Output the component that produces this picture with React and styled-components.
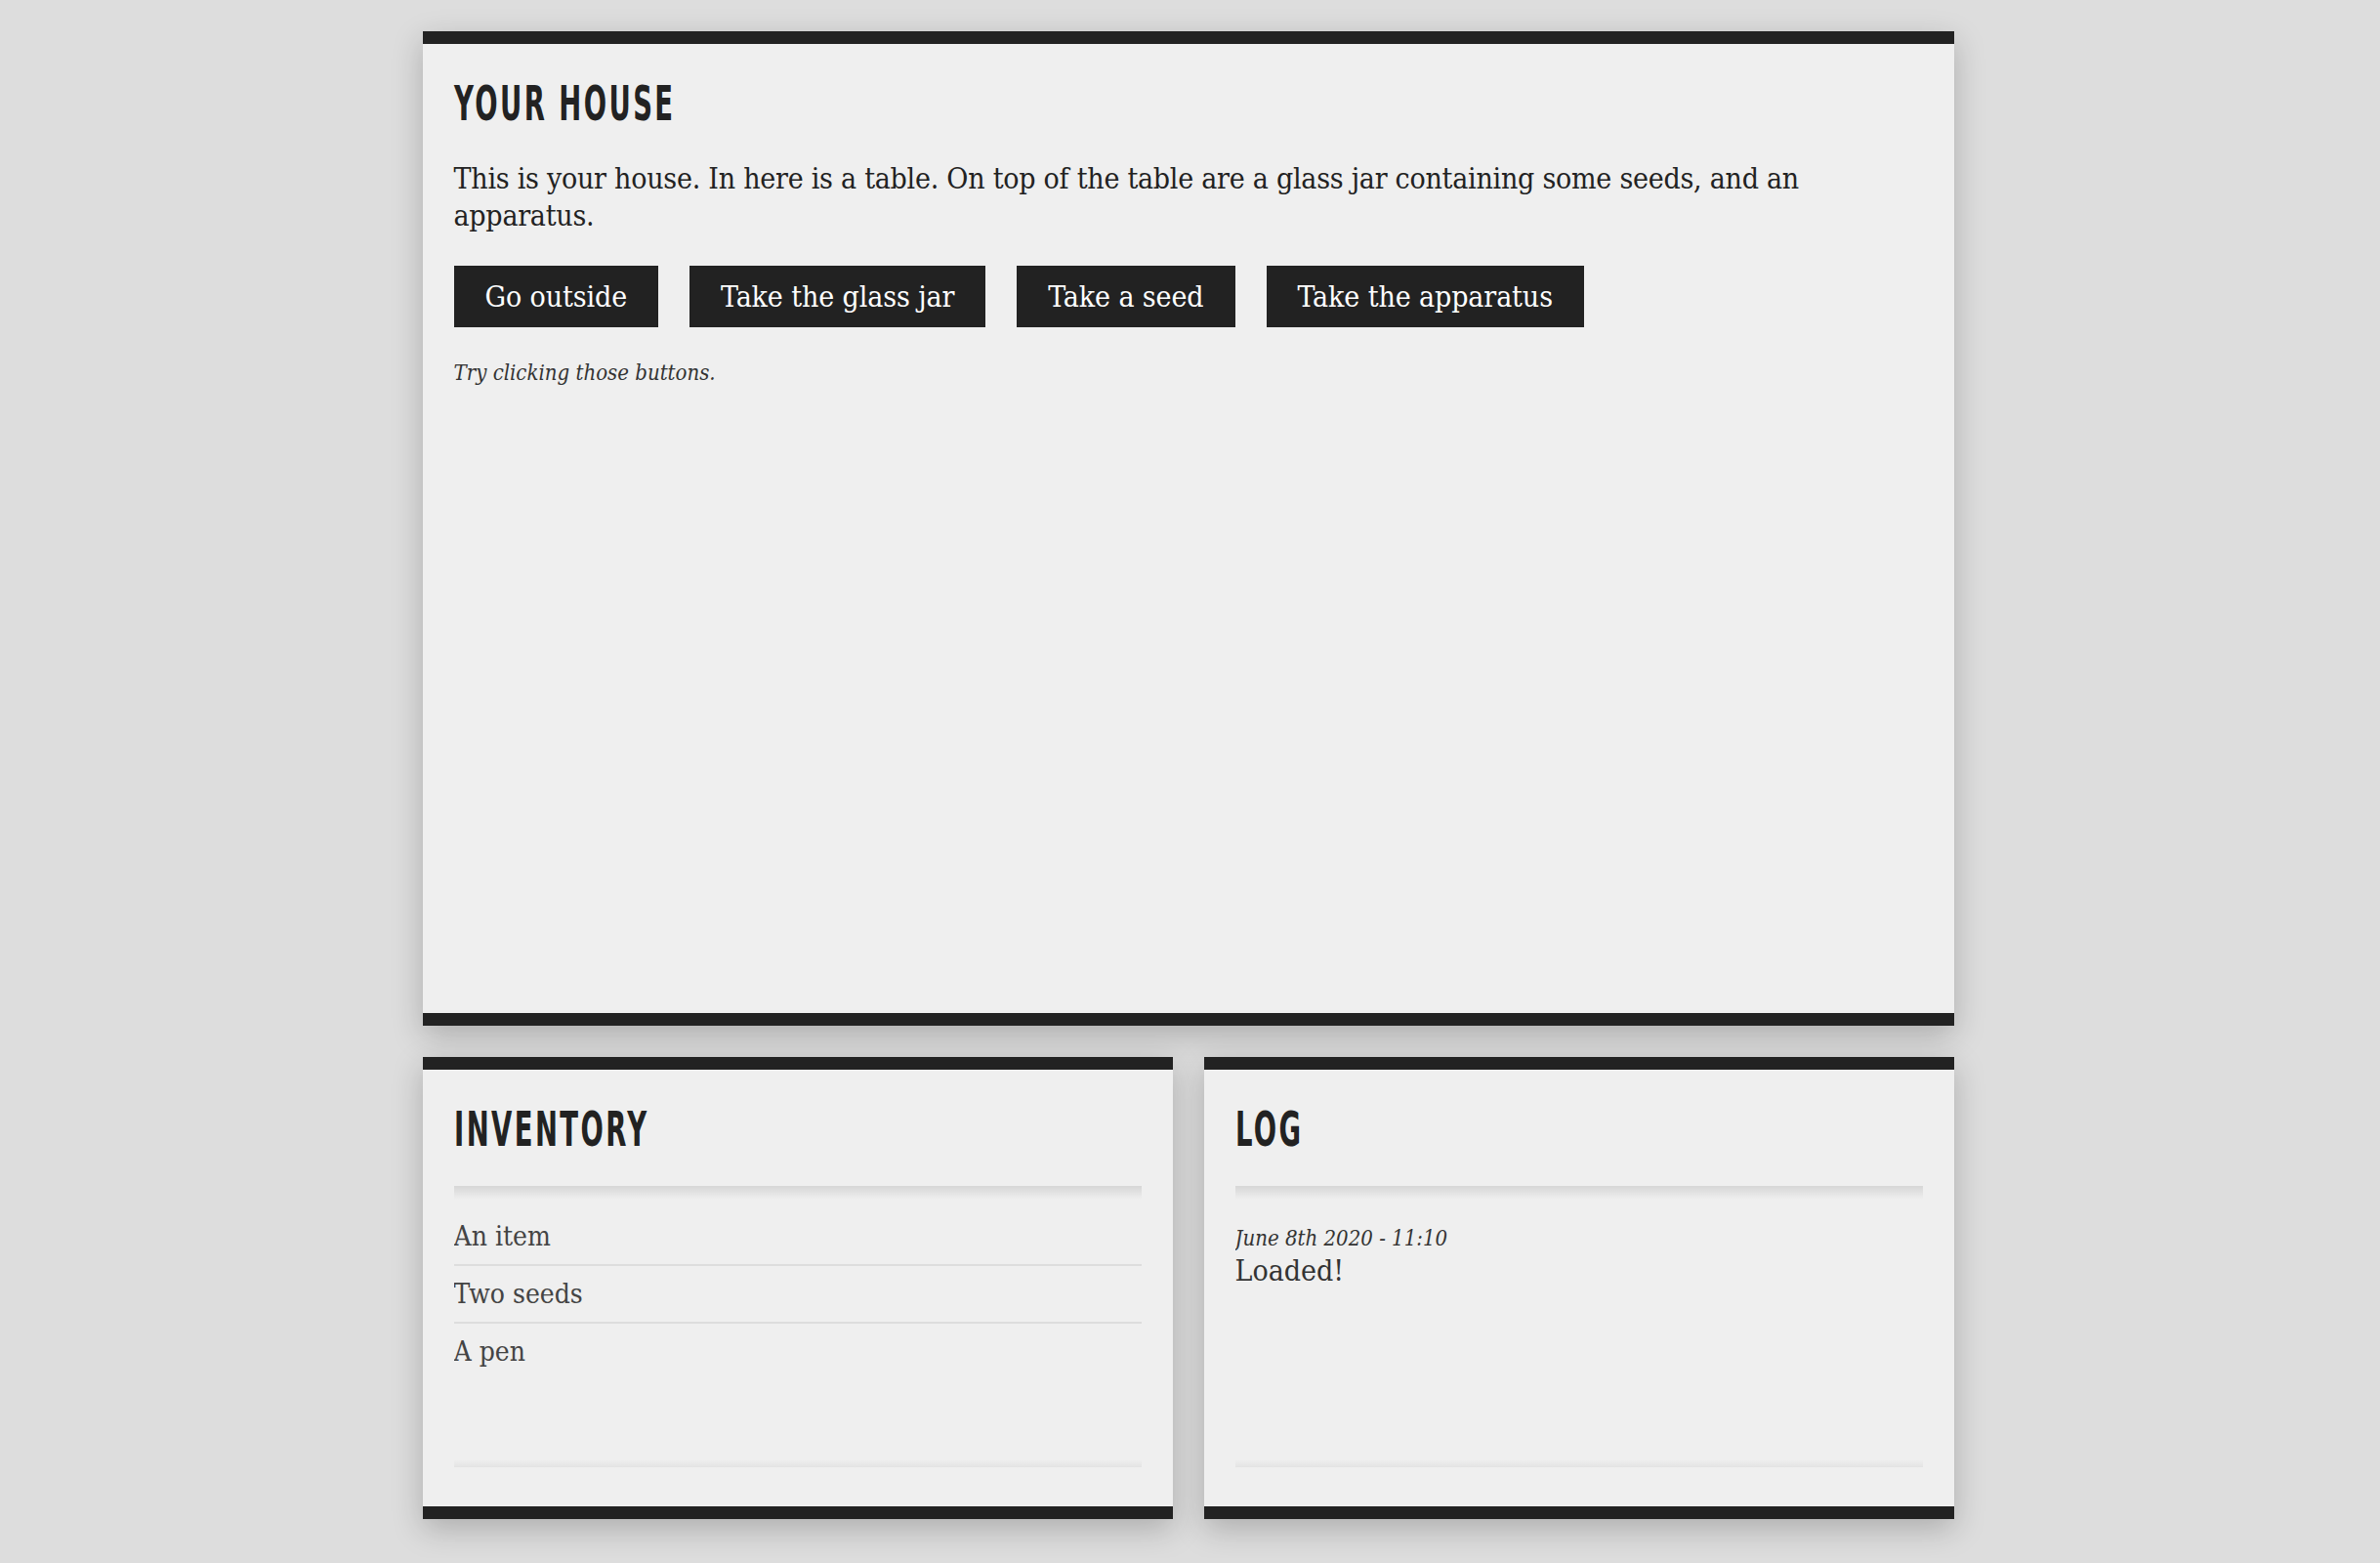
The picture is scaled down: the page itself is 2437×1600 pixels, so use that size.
import React from "react";
import styled, { createGlobalStyle } from "styled-components";

const GlobalStyle = createGlobalStyle`
  html, body {
    margin: 0;
    padding: 0;
    background: #dddddd;
  }
  body {
    font-family: "DejaVu Serif", serif;
    font-stretch: condensed;
    color: #222;
  }
`;

const Page = styled.div`
  width: 1568px;
  margin-left: calc(50% - 786px);
  padding: 32px 0 40px;
  display: flex;
  flex-direction: column;
  gap: 32px;
`;

const Row = styled.div`
  display: grid;
  grid-template-columns: 1fr 1fr;
  gap: 32px;
`;

const Panel = styled.section`
  box-sizing: border-box;
  height: ${({ $height }) => $height}px;
  padding: 37px 32px ${({ $padBottom }) => $padBottom || 32}px;
  background: #efefef;
  border-top: 13px solid #222;
  border-bottom: 13px solid #222;
  box-shadow: 0 10px 30px rgba(0, 0, 0, 0.22);
`;

const Title = styled.h2`
  margin: 0;
  width: fit-content;
  font-family: "DejaVu Sans", sans-serif;
  font-stretch: condensed;
  font-weight: 700;
  font-size: 50px;
  line-height: 49px;
  letter-spacing: 4px;
  text-transform: uppercase;
  color: #222;
  transform: scaleX(0.61);
  transform-origin: left center;
`;

const Text = styled.p`
  margin: 33px 0 0;
  font-size: 30px;
  line-height: 38px;
  letter-spacing: -0.25px;
  color: #222;
`;

const Actions = styled.div`
  display: flex;
  gap: 32px;
  margin-top: 32px;
`;

const Button = styled.button`
  padding: 12px 32px;
  border: 0;
  border-radius: 0;
  background: #222;
  color: #fff;
  font-family: inherit;
  font-stretch: condensed;
  font-size: 30px;
  line-height: 39px;
  letter-spacing: -0.1px;
  cursor: pointer;
`;

const Hint = styled.p`
  margin: 33px 0 0;
  font-style: italic;
  font-size: 22px;
  line-height: 28px;
  color: #333;
`;

const ScrollBox = styled.div`
  position: relative;
  margin-top: 33px;
  height: 288px;
  overflow: hidden;

  &::before,
  &::after {
    content: "";
    position: absolute;
    left: 0;
    right: 0;
  }
  &::before {
    top: 0;
    height: 14px;
    background: linear-gradient(rgba(0, 0, 0, 0.1), rgba(0, 0, 0, 0));
  }
  &::after {
    bottom: 0;
    height: 8px;
    background: linear-gradient(rgba(0, 0, 0, 0), rgba(0, 0, 0, 0.05));
  }
`;

const List = styled.ul`
  margin: 0;
  padding: 23px 0 0;
  list-style: none;
`;

const Item = styled.li`
  padding: 10px 0 9px;
  font-size: 28px;
  line-height: 38px;
  color: #444;
  border-bottom: 2px solid #dddddd;

  &:last-child {
    border-bottom: 0;
  }
`;

const LogEntries = styled.div`
  padding-top: 40px;
`;

const Entry = styled.div`
  display: flex;
  flex-direction: column;
`;

const Stamp = styled.span`
  font-style: italic;
  font-size: 22px;
  line-height: 28px;
  color: #333;
`;

const Message = styled.span`
  font-size: 30px;
  line-height: 38px;
  color: #333;
`;

const actions = ["Go outside", "Take the glass jar", "Take a seed", "Take the apparatus"];
const inventory = ["An item", "Two seeds", "A pen"];
const log = [{ time: "June 8th 2020 - 11:10", text: "Loaded!" }];

export default function App() {
  return (
    <>
      <GlobalStyle />
      <Page>
        <Panel $height={1018}>
          <Title>Your house</Title>
          <Text>
            This is your house. In here is a table. On top of the table are a glass jar
            containing some seeds, and an apparatus.
          </Text>
          <Actions>
            {actions.map(a => (
              <Button key={a}>{a}</Button>
            ))}
          </Actions>
          <Hint>Try clicking those buttons.</Hint>
        </Panel>
        <Row>
          <Panel $height={473} $padBottom={41}>
            <Title>Inventory</Title>
            <ScrollBox>
              <List>
                {inventory.map(i => (
                  <Item key={i}>{i}</Item>
                ))}
              </List>
            </ScrollBox>
          </Panel>
          <Panel $height={473} $padBottom={41}>
            <Title>Log</Title>
            <ScrollBox>
              <LogEntries>
                {log.map(e => (
                  <Entry key={e.time}>
                    <Stamp>{e.time}</Stamp>
                    <Message>{e.text}</Message>
                  </Entry>
                ))}
              </LogEntries>
            </ScrollBox>
          </Panel>
        </Row>
      </Page>
    </>
  );
}
